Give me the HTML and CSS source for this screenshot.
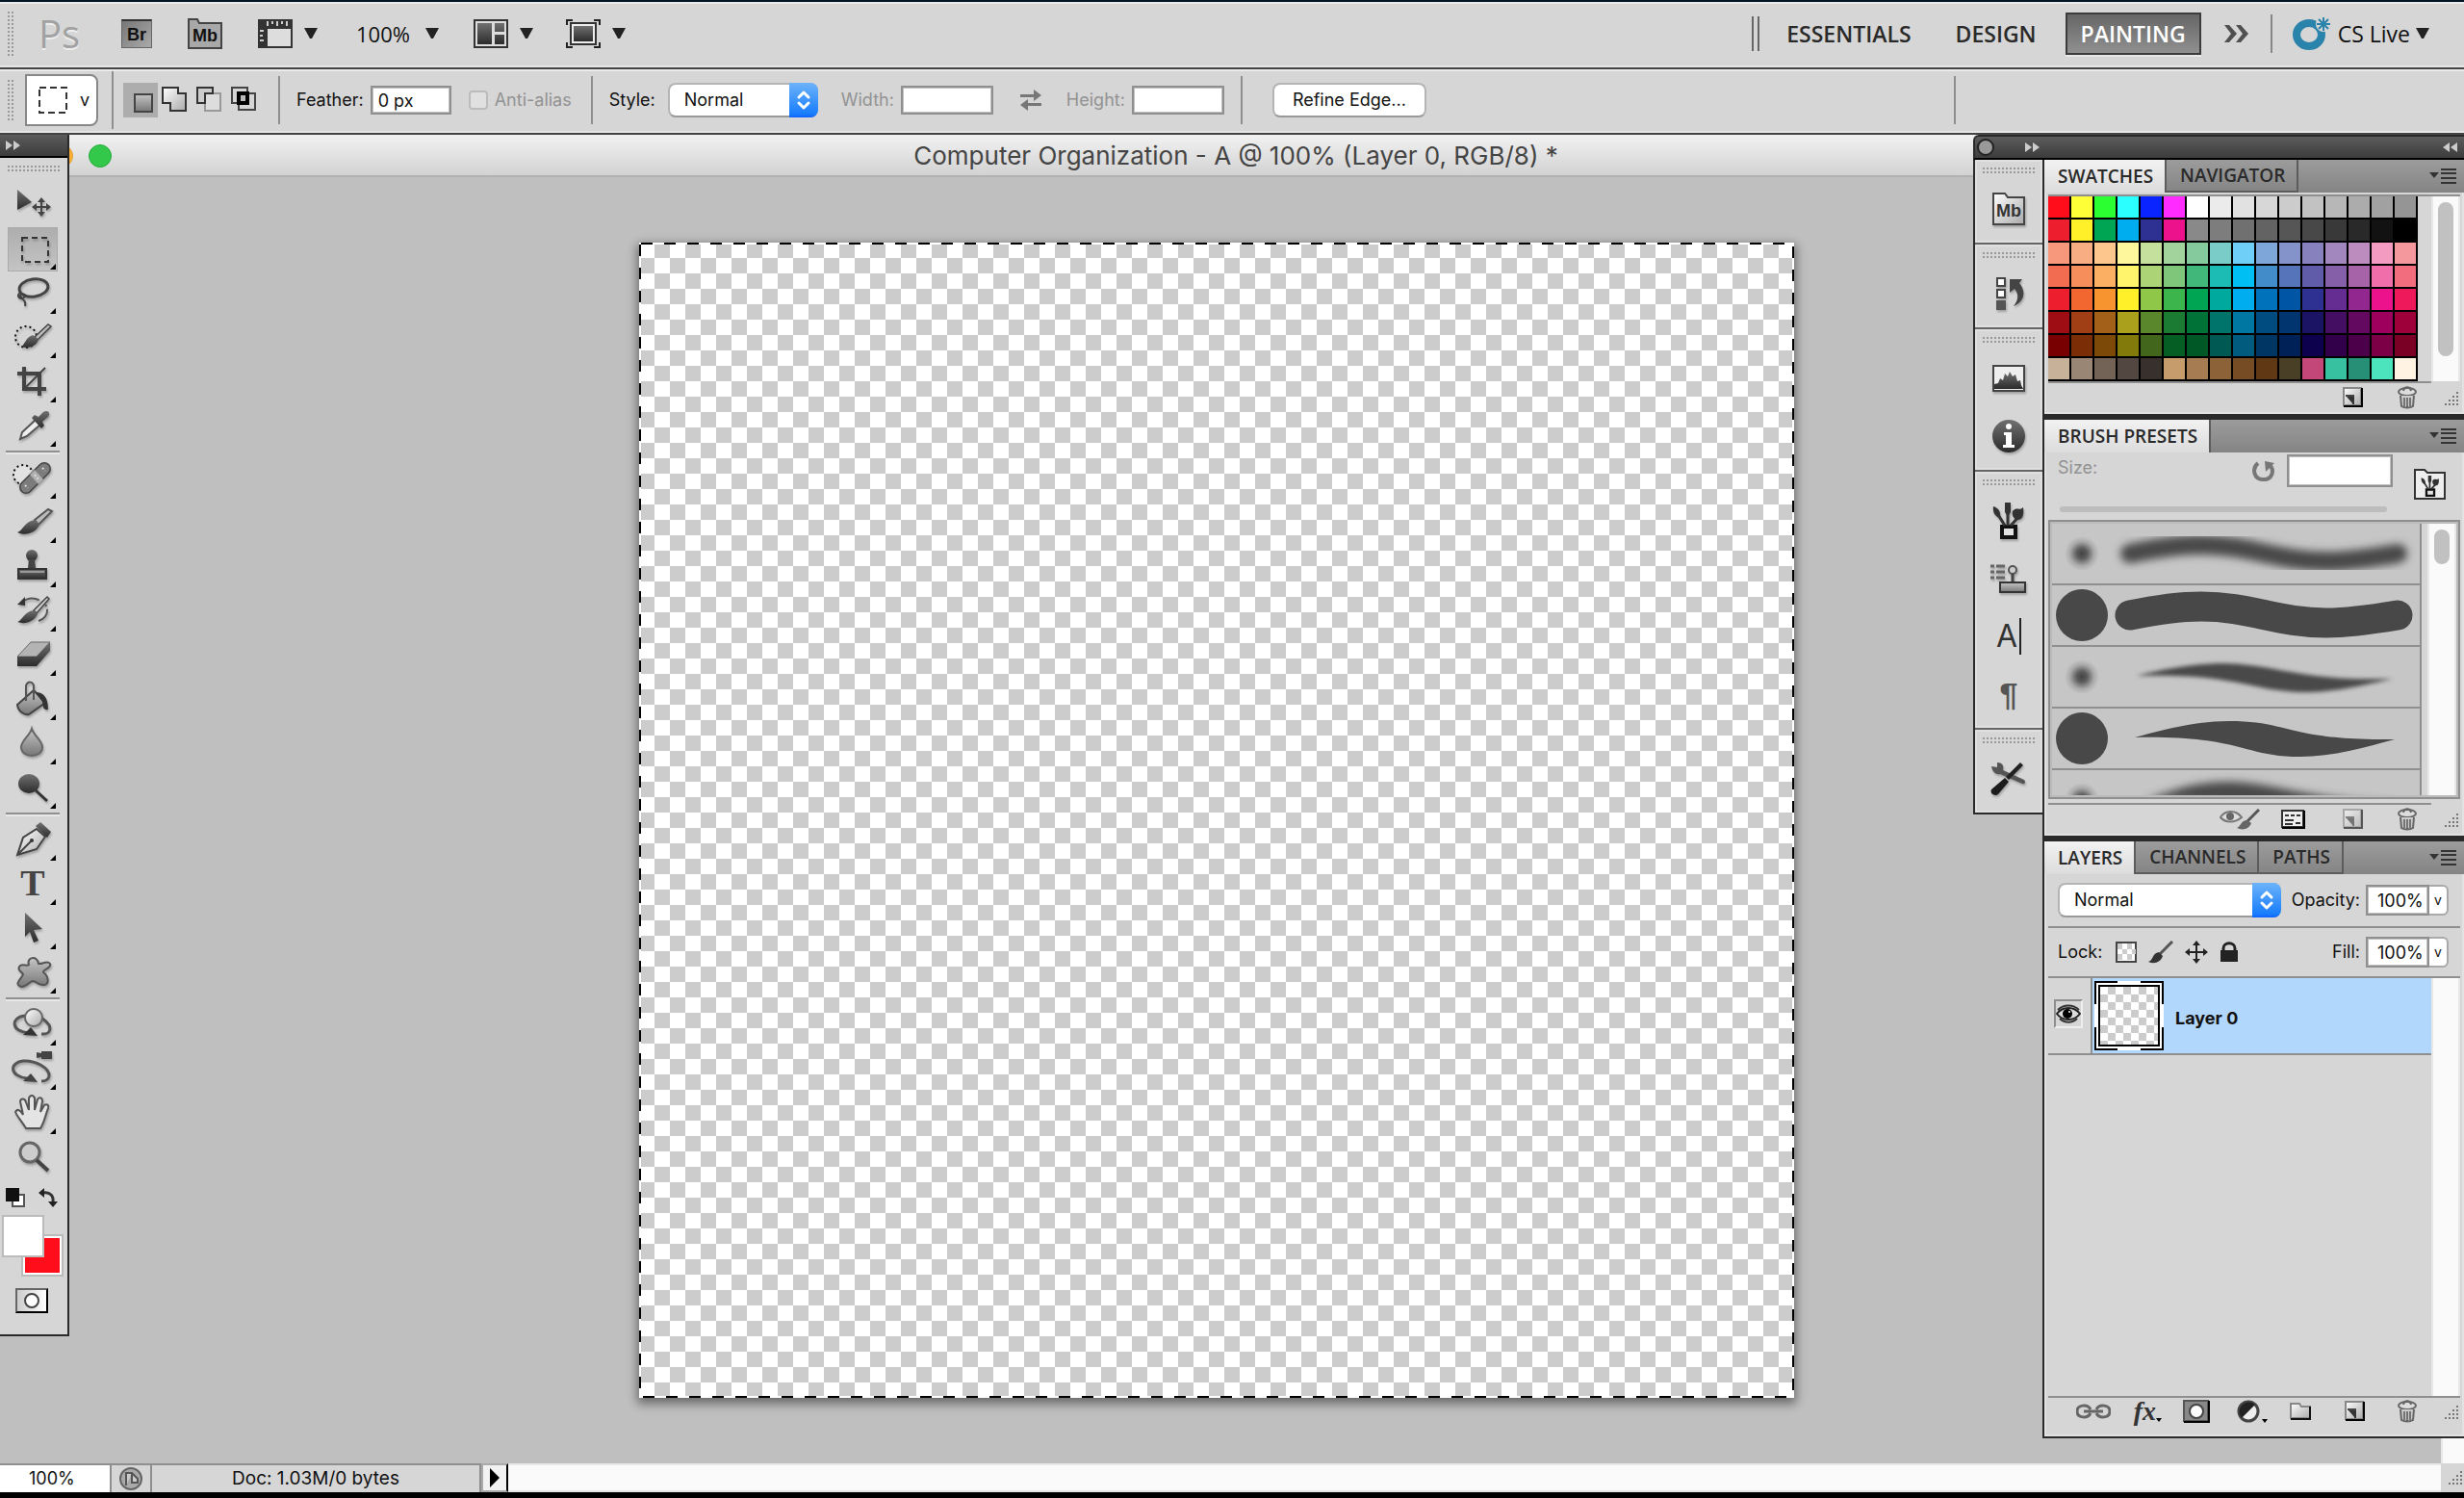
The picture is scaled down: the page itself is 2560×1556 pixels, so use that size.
FILE: index.html
```html
<!DOCTYPE html>
<html lang="en">
  <head>
    <meta charset="UTF-8" />
    <meta name="viewport" content="width=device-width, initial-scale=1.0" />
    <title>Computer Organization</title>
    <link rel="stylesheet" href="styles.css">
  </head>
  <body>
    <!-- shared gradients and symbols -->
    <svg class="defs" width="0" height="0">
      <defs>
        <linearGradient id="dark" x1="0" y1="0" x2="0" y2="1"><stop offset="0" stop-color="#707070"/><stop offset="1" stop-color="#2c2c2c"/></linearGradient>
        <linearGradient id="mid" x1="0" y1="0" x2="0" y2="1"><stop offset="0" stop-color="#c4c4c4"/><stop offset="1" stop-color="#777"/></linearGradient>
        <linearGradient id="light" x1="0" y1="0" x2="1" y2="1"><stop offset="0" stop-color="#fff"/><stop offset="1" stop-color="#aaa"/></linearGradient>
        <radialGradient id="soft"><stop offset="0" stop-color="#444"/><stop offset="0.3" stop-color="#5c5c5c"/><stop offset="0.7" stop-color="#aaa"/><stop offset="1" stop-color="#c6c6c6"/></radialGradient>
        <filter id="blur" x="-10%" y="-50%" width="120%" height="200%"><feGaussianBlur stdDeviation="4"/></filter>
        <filter id="blur-small" x="-10%" y="-50%" width="120%" height="200%"><feGaussianBlur stdDeviation="2"/></filter>
      </defs>
      <symbol id="caret" viewBox="0 0 14 12"><path d="M0 0h14L8 11H6z" fill="#222"/></symbol>
      <symbol id="updown" viewBox="0 0 28 36"><path d="M9 15l5-5 5 5M9 21l5 5 5-5" fill="none" stroke="#fff" stroke-width="3" stroke-linecap="round" stroke-linejoin="round"/></symbol>
      <symbol id="menu" viewBox="0 0 28 16"><path d="M0 4h10L5 10z" fill="#333"/><path d="M12 1h16M12 5h16M12 10h16M12 15h16" stroke="#333" stroke-width="2"/></symbol>
      <symbol id="page" viewBox="0 0 22 22"><path d="M1 1h18v18H1z" fill="url(#light)" stroke="#888" stroke-width="2"/><path d="M20 1v19H1" fill="none" stroke="#000" stroke-width="2"/><path d="M3 9h8v9" fill="none" stroke="#444" stroke-width="2"/><path d="M4 10l7 8h1v-8z" fill="#333"/></symbol>
      <symbol id="trash" viewBox="0 0 22 24"><ellipse cx="11" cy="6" rx="9" ry="4" fill="#ddd" stroke="#666" stroke-width="2"/><path d="M7 5c1-5 7-5 8 0" fill="none" stroke="#666" stroke-width="2"/><path d="M4 10l1 11c3 2 9 2 12 0l1-11" fill="#ccc" stroke="#666" stroke-width="2"/><path d="M8 12v9M11 12v10M14 12v9" stroke="#555" stroke-width="1.500"/></symbol>
      <symbol id="cups" viewBox="0 0 36 38"><path d="M11 25h14v11H11z" fill="#e2e2e2" stroke="#111" stroke-width="4"/><path d="M14 24L6 11M17 24V8M20 24l8-9" stroke="#333" stroke-width="3"/><path d="M2 4c6 2 8 6 7 12-5-1-8-6-7-12zM14 0h6v10l-2 3h-2l-2-3zM22 9c4-5 7 0 11-4 1 7 0 13-6 13-4-1-6-5-5-9z" fill="#333"/></symbol>
    </svg>

    <header class="app-bar">
      <span class="grip grip-side"></span>
      <span class="ps">Ps</span>
      <button class="app-br">Br</button>
      <button class="app-mb">
        <svg width="38" height="34" viewBox="0 0 38 34"><path d="M2 32V2h9l2 4h23v26z" fill="#a8a8a8" stroke="#444" stroke-width="2"/></svg>
        <span>Mb</span>
      </button>
      <button class="app-icon extras">
        <svg width="36" height="30" viewBox="0 0 36 30"><path d="M0 0h36v30H0z" fill="#333"/><path d="M10 10h24v18H10z" fill="#ddd"/><path d="M10 2v5M15 2v3M20 2v5M25 2v3M30 2v5M2 12h4M2 17h3M2 22h4" stroke="#ccc" stroke-width="2"/></svg>
        <svg class="caret"><use href="#caret"/></svg>
      </button>
      <button class="app-icon zoom-level">100% <svg class="caret"><use href="#caret"/></svg></button>
      <button class="app-icon arrange">
        <svg width="36" height="30" viewBox="0 0 36 30"><path d="M1 1h34v28H1z" fill="#ddd" stroke="#333" stroke-width="2"/><path d="M4 4h15v22H4zM22 4h10v9H22zM22 16h10v10H22z" fill="url(#dark)"/></svg>
        <svg class="caret"><use href="#caret"/></svg>
      </button>
      <button class="app-icon screen-mode">
        <svg width="36" height="30" viewBox="0 0 36 30"><path d="M1 6V1h6M29 1h6v5M35 24v5h-6M7 29H1v-5" fill="none" stroke="#222" stroke-width="2"/><path d="M5 4h26v22H5z" fill="#eee" stroke="#333" stroke-width="2"/><path d="M8 7h20v16H8z" fill="url(#dark)"/></svg>
        <svg class="caret"><use href="#caret"/></svg>
      </button>
      <nav class="workspaces">
        <span class="double-bar"></span>
        <button>ESSENTIALS</button>
        <button>DESIGN</button>
        <button class="active">PAINTING</button>
        <button class="more" aria-label="More workspaces"><svg width="28" height="22" viewBox="0 0 28 22"><path d="M2 2h5l8 9-8 9H2l7-9zM14 2h5l8 9-8 9h-5l7-9z" fill="#505050"/></svg></button>
      </nav>
      <button class="cs-live">
        <svg width="42" height="36" viewBox="0 0 42 36"><ellipse cx="18" cy="19" rx="13" ry="12" fill="none" stroke="#2a83ab" stroke-width="8"/><circle cx="33" cy="8" r="8" fill="#d6d6d6"/><path d="M33 1v14M26 8h14M28 3l10 10M38 3L28 13" stroke="#2a83ab" stroke-width="2"/></svg>
        <span>CS Live</span>
        <svg class="caret"><use href="#caret"/></svg>
      </button>
    </header>

    <div class="options-bar">
      <span class="grip grip-side"></span>
      <button class="tool-preset">
        <svg width="30" height="28" viewBox="0 0 30 28"><path d="M1 1h28v26H1z" fill="none" stroke="#333" stroke-width="2" stroke-dasharray="7 4"/></svg>
        <span>v</span>
      </button>
      <div class="modes">
        <button class="on" aria-label="New selection"><svg viewBox="0 0 36 36"><path d="M12 12h18v18H12z" fill="url(#mid)" stroke="#444" stroke-width="2"/></svg></button>
        <button aria-label="Add"><svg viewBox="0 0 36 36"><path d="M5 5h16v6h8v18H13v-8H5z" fill="url(#light)" stroke="#333" stroke-width="2"/></svg></button>
        <button aria-label="Subtract"><svg viewBox="0 0 36 36"><path d="M13 11h16v18H13z" fill="#ddd" stroke="#999" stroke-width="2"/><path d="M5 5h16v6h-8v10H5z" fill="#ccc" stroke="#333" stroke-width="2"/></svg></button>
        <button aria-label="Intersect"><svg viewBox="0 0 36 36"><path d="M5 5h16v16H5zM12 11h17v17H12z" fill="none" stroke="#444" stroke-width="2"/><path d="M12 11h9v10h-9z" fill="#bbb" stroke="#000" stroke-width="4"/></svg></button>
      </div>
      <span class="rule"></span>
      <label for="feather">Feather:</label>
      <input class="field feather" id="feather" type="text" value="0 px">
      <input class="check" id="alias" type="checkbox" disabled>
      <label class="off" for="alias">Anti-alias</label>
      <span class="rule"></span>
      <label for="style">Style:</label>
      <span class="select style-select"><select id="style"><option>Normal</option></select><svg><use href="#updown"/></svg></span>
      <label class="off width-label" for="width">Width:</label>
      <input class="field size" id="width" type="text" disabled>
      <button class="swap" aria-label="Swap width and height"><svg width="26" height="22" viewBox="0 0 26 22"><path d="M2 5h14V0l8 6-8 6V8H2zM24 17H10v5l-8-6 8-6v4h14z" fill="#777"/></svg></button>
      <label class="off" for="height">Height:</label>
      <input class="field size" id="height" type="text" disabled>
      <span class="rule"></span>
      <button class="refine">Refine Edge...</button>
      <span class="rule far"></span>
    </div>

    <main class="document">
      <div class="title-bar">
        <span class="light minimize"></span>
        <span class="light maximize"></span>
        <h1>Computer Organization - A @ 100% (Layer 0, RGB/8) *</h1>
      </div>
      <div class="work-area">
        <div class="stage"><div class="artboard"></div></div>
        <div class="v-scroll"></div>
      </div>
      <footer class="status-bar">
        <input class="status-zoom" type="text" value="100%" aria-label="Zoom">
        <button class="status-icon" aria-label="Version"><svg width="26" height="26" viewBox="0 0 26 26"><circle cx="13" cy="13" r="11" fill="#aaa" stroke="#666" stroke-width="2"/><path d="M8 20V7h6l6 6v4h-6V7" fill="#ccc" stroke="#555" stroke-width="2"/></svg></button>
        <span class="status-doc">Doc: 1.03M/0 bytes</span>
        <button class="status-more" aria-label="Status menu"><svg width="10" height="20" viewBox="0 0 10 20"><path d="M0 0l10 10L0 20z"/></svg></button>
        <div class="h-scroll"></div>
        <div class="corner"><i class="resize"></i></div>
      </footer>

      <!-- tools palette -->
      <aside class="toolbox">
        <div class="palette-head"><svg width="16" height="12" viewBox="0 0 16 12"><path d="M0 1l7 5-7 5zM8 1l7 5-7 5z" fill="#ccc"/></svg></div>
        <span class="grip grip-top"></span>
        <div class="tools">
          <button class="flat" aria-label="Move"><svg viewBox="0 0 52 46"><path d="M10 7l15 13-15 8z" fill="url(#dark)"/><path d="M35 17v16M27 25h16" stroke="#444" stroke-width="2"/><path d="M35 15l4 5h-8zM35 35l4-5h-8zM25 25l5-4v8zM45 25l-5-4v8z" fill="#444"/></svg></button>
          <button class="on" aria-label="Marquee"><svg viewBox="0 0 52 46"><path d="M15 11h27v25H15z" fill="none" stroke="#333" stroke-width="2" stroke-dasharray="6 4"/></svg></button>
          <button aria-label="Lasso"><svg viewBox="0 0 52 46"><ellipse cx="27" cy="17" rx="15" ry="9" fill="none" stroke="#444" stroke-width="3" transform="rotate(-8 27 17)"/><path d="M13 22c-5 3 0 8 4 5s-3-5-4-2c1 4 7 4 5 11" fill="none" stroke="#444" stroke-width="2"/></svg></button>
          <button aria-label="Quick selection"><svg viewBox="0 0 52 46"><circle cx="19" cy="22" r="11" fill="none" stroke="#111" stroke-width="2" stroke-dasharray="2 3"/><path d="M28 22l14-13 3 2-14 14z" fill="#bbb" stroke="#444" stroke-width="1.500"/><path d="M14 32c4-2 4-9 12-12l6 5c-3 8-12 9-18 7z" fill="url(#dark)"/></svg></button>
          <button aria-label="Crop"><svg viewBox="0 0 52 46"><path d="M17 7v23h23M10 14h23v23" fill="none" stroke="#444" stroke-width="4"/><path d="M17 30L39 8" stroke="#444" stroke-width="2"/></svg></button>
          <button aria-label="Eyedropper"><svg viewBox="0 0 52 46"><path d="M13 36l2-7 14-13 5 5-14 12z" fill="#eee" stroke="#555" stroke-width="2"/><path d="M25 14l3-3 4 2 5-5c5-3 8 1 5 5l-6 5 2 4-3 3z" fill="url(#dark)"/></svg></button>
          <hr>
          <button aria-label="Healing brush"><svg viewBox="0 0 52 46"><circle cx="16" cy="19" r="10" fill="#e2e2e2" stroke="#111" stroke-width="2" stroke-dasharray="2 3"/><path d="M19 32L38 13" stroke="#444" stroke-width="14" stroke-linecap="round"/><path d="M19 32L38 13" stroke="#7c7c7c" stroke-width="11" stroke-linecap="round"/><path d="M23 19l9 10 5-5-9-10z" fill="#b0b0b0"/><path d="M18 30l3 3M36 12l3 3M28 19l4 5" stroke="#ddd" stroke-width="2" stroke-dasharray="2 2"/></svg></button>
          <button aria-label="Brush"><svg viewBox="0 0 52 46"><path d="M28 20L42 9l4 2-14 14z" fill="#bbb" stroke="#555" stroke-width="2"/><path d="M10 33c6-2 7-11 18-13l5 5c-4 9-15 12-23 8z" fill="url(#dark)"/></svg></button>
          <button aria-label="Clone stamp"><svg viewBox="0 0 52 46"><circle cx="25" cy="11" r="6" fill="url(#dark)"/><path d="M22 15h6l1 9h-8z" fill="#444"/><path d="M11 25h29v10H11z" fill="url(#dark)" stroke="#333" stroke-width="2"/><path d="M13 28h25" stroke="#999" stroke-width="2"/></svg></button>
          <button aria-label="History brush"><svg viewBox="0 0 52 46"><path d="M14 14c10-8 22-4 27 5 1 7-3 12-9 14" fill="none" stroke="#555" stroke-width="2" stroke-dasharray="20 3 2 3 2 3"/><path d="M10 16l8-8v9z" fill="#333"/><path d="M27 22L41 8l2 2-13 15z" fill="#ccc" stroke="#444" stroke-width="1.500"/><path d="M10 34c5-1 7-11 17-12l4 4c-4 8-13 11-21 8z" fill="url(#dark)"/></svg></button>
          <button aria-label="Eraser"><svg viewBox="0 0 52 46"><path d="M10 24L24 9h20L30 24z" fill="#b4b4b4" stroke="#666"/><path d="M10 24h20v10H10zM30 24L44 9v9L30 34z" fill="url(#dark)"/></svg></button>
          <button aria-label="Paint bucket"><svg viewBox="0 0 52 46"><path d="M10 28l17-15 12 13-17 12c-5 1-11-3-12-10z" fill="url(#mid)" stroke="#444" stroke-width="2"/><path d="M19 24V8c2-5 7-4 8 0v15" fill="none" stroke="#555" stroke-width="2"/><path d="M29 15c8 0 13 5 13 18-6 1-5-4-6-8z" fill="#333"/></svg></button>
          <button aria-label="Blur"><svg viewBox="0 0 52 46"><path d="M25 7c2 7 11 12 11 19 0 12-22 12-22 0 0-7 9-12 11-19z" fill="url(#mid)" stroke="#666" stroke-width="2"/></svg></button>
          <button aria-label="Dodge"><svg viewBox="0 0 52 46"><ellipse cx="22" cy="18" rx="11" ry="10" fill="url(#dark)"/><path d="M29 25l12 11" stroke="#333" stroke-width="3"/></svg></button>
          <hr>
          <button aria-label="Pen"><svg viewBox="0 0 52 46"><path d="M10 38l6-18 14-9 9 8-9 13z" fill="url(#light)" stroke="#444" stroke-width="2"/><path d="M11 37l13-13" stroke="#444" stroke-width="2"/><circle cx="25" cy="23" r="2" fill="#333"/><path d="M29 8l5-4 11 10-4 6z" fill="url(#dark)"/></svg></button>
          <button class="type" aria-label="Type">T</button>
          <button aria-label="Path selection"><svg viewBox="0 0 52 46"><path d="M18 6l18 17-9 1 5 11-5 2-4-11-5 5z" fill="url(#dark)"/></svg></button>
          <button aria-label="Custom shape"><svg viewBox="0 0 52 46"><path d="M22 14c-3-8 9-10 10-1 4 1 9-4 12 0 2 5-8 6-7 9 6 4 6 13 1 13-6 1-8-4-12-4-4 1-7 7-12 6-9-3 2-10 2-13-2-3-7-5-3-9 3-2 7 1 9-1z" fill="url(#mid)" stroke="#555" stroke-width="2"/></svg></button>
          <hr>
          <button aria-label="3D rotate"><svg viewBox="0 0 52 46"><path d="M18 13C2 15 4 30 22 31M36 16c13 9 8 17-1 16" fill="none" stroke="#555" stroke-width="3"/><path d="M16 33l8-8 7 9z" fill="#333"/><circle cx="27" cy="15" r="9" fill="url(#light)" stroke="#666" stroke-width="2"/></svg></button>
          <button aria-label="3D camera"><svg viewBox="0 0 52 46"><path d="M20 32C2 30 1 16 16 14c12-1 28 7 27 16-1 4-4 5-8 5" fill="none" stroke="#555" stroke-width="3"/><path d="M16 35l8-8 7 9zM30 8V5l5 1V4h11v8H35v-2l-5 1z" fill="#444"/></svg></button>
          <button aria-label="Hand"><svg viewBox="0 0 52 46"><path d="M19 38C15 31 10 26 8 21c2-4 5-2 8 3L13 10c1-4 5-3 6 1l3 8V7c1-4 5-4 6 0v12l3-11c2-3 5-2 5 2l-2 11 4-7c3-2 5 0 4 3-3 8-4 15-8 21z" fill="#e4e4e4" stroke="#555" stroke-width="2"/></svg></button>
          <button class="flat" aria-label="Zoom"><svg viewBox="0 0 52 46"><circle cx="23" cy="17" r="10" fill="#ccc" stroke="#666" stroke-width="3"/><path d="M30 25l12 11" stroke="#444" stroke-width="4"/></svg></button>
        </div>
        <div class="color-tools">
          <svg width="20" height="20" viewBox="0 0 20 20"><path d="M7 7h12v12H7z" fill="#fff" stroke="#555" stroke-width="2"/><path d="M0 0h14v14H0z" fill="#111"/></svg>
          <svg width="20" height="20" viewBox="0 0 20 20"><path d="M5 5c7-1 11 3 10 10" fill="none" stroke="#333" stroke-width="3"/><path d="M0 5l6-5v10zM15 20l-5-6h10z" fill="#222"/></svg>
        </div>
        <div class="color-pair">
          <button class="back-color" aria-label="Background colour"></button>
          <button class="front-color" aria-label="Foreground colour"></button>
        </div>
        <button class="quick-mask" aria-label="Quick mask"><svg width="18" height="18" viewBox="0 0 18 18"><circle cx="9" cy="9" r="7" fill="#fff" stroke="#444" stroke-width="2"/></svg></button>
      </aside>

      <!-- right dock -->
      <aside class="dock">
        <div class="palette-head dock-head">
          <i class="close"></i>
          <svg width="16" height="12" viewBox="0 0 16 12"><path d="M0 1l7 5-7 5zM8 1l7 5-7 5z" fill="#ccc"/></svg>
          <svg class="collapse" width="16" height="12" viewBox="0 0 16 12"><path d="M7 1L0 6l7 5zM15 1L8 6l7 5z" fill="#ccc"/></svg>
        </div>
        <div class="dock-body">
          <div class="icon-dock">
            <div class="icon-group">
              <span class="grip grip-top"></span>
              <button class="mini-bridge" aria-label="Mini Bridge"><svg width="36" height="36" viewBox="0 0 36 36"><path d="M2 34V2h12l3 4h17v28z" fill="url(#light)" stroke="#444" stroke-width="2"/></svg><span>Mb</span></button>
            </div>
            <div class="icon-group">
              <span class="grip grip-top"></span>
              <button aria-label="History"><svg width="36" height="36" viewBox="0 0 36 36"><path d="M6 2h8v8H6zM6 14h8v8H6z" fill="#fff" stroke="#444" stroke-width="2"/><path d="M5 25h10v10H5z" fill="#555"/><path d="M19 3h13l-3 4c7 8 6 19-6 24 6-8 5-13 1-18l-5 4z" fill="#444"/></svg></button>
            </div>
            <div class="icon-group">
              <span class="grip grip-top"></span>
              <button aria-label="Histogram"><svg width="36" height="30" viewBox="0 0 36 30"><path d="M2 2h32v26H2z" fill="#eee" stroke="#444" stroke-width="2"/><path d="M3 26v-5l4-1 2-5 3 2 2-7 3 3 2-5 3 5 3-2 2 7 3-1 1 5 2 4z" fill="url(#dark)"/></svg></button>
              <button aria-label="Info"><svg width="36" height="36" viewBox="0 0 36 36"><circle cx="18" cy="18" r="17" fill="url(#dark)"/><path d="M13 14h8v13h3v3H12v-3h3V17h-2z" fill="#fff"/><circle cx="18" cy="8" r="3" fill="#fff"/></svg></button>
            </div>
            <div class="icon-group">
              <span class="grip grip-top"></span>
              <button aria-label="Brush"><svg width="36" height="38"><use href="#cups"/></svg></button>
              <button aria-label="Clone source"><svg width="38" height="32" viewBox="0 0 38 32"><path d="M0 3h4M6 3h9M0 9h4M6 9h9M0 15h4M6 15h9" stroke="#666" stroke-width="3"/><circle cx="23" cy="7" r="4" fill="#ccc" stroke="#555" stroke-width="2"/><path d="M23 11v9" stroke="#444" stroke-width="3"/><path d="M10 20h26v10H10z" fill="url(#mid)" stroke="#333" stroke-width="2"/></svg></button>
              <button class="char" aria-label="Character">A</button>
              <button class="para" aria-label="Paragraph">¶</button>
            </div>
            <div class="icon-group">
              <span class="grip grip-top"></span>
              <button aria-label="Tool presets"><svg width="38" height="36" viewBox="0 0 38 36"><path d="M1 5l6 1V1c6 0 7 4 6 8l22 10c2 2 1 5-2 4L10 13c-4 1-8-2-9-8z" fill="#555"/><path d="M31 1l3 3-15 15-3-3z" fill="#222"/><path d="M15 17l4 4L8 34c-4 3-9-1-7-5z" fill="#1c1c1c"/></svg></button>
            </div>
          </div>

          <div class="panels">
            <section class="panel">
              <div class="tabs"><button class="active">SWATCHES</button><button>NAVIGATOR</button><svg class="menu"><use href="#menu"/></svg></div>
              <div class="swatch-area">
                <div class="swatches" id="swatches"></div>
                <div class="scroll"><i class="thumb tall"></i></div>
              </div>
              <div class="panel-foot"><svg class="page"><use href="#page"/></svg><svg class="trash"><use href="#trash"/></svg><i class="resize"></i></div>
            </section>

            <section class="panel">
              <div class="tabs"><button class="active">BRUSH PRESETS</button><svg class="menu"><use href="#menu"/></svg></div>
              <div class="brush-size">
                <div class="size-main">
                  <div class="size-row">
                    <label class="off" for="brush-size">Size:</label>
                    <svg width="24" height="24" viewBox="0 0 24 24"><path d="M6 4c-7 6-4 17 5 17 9 1 13-9 7-15" fill="none" stroke="#777" stroke-width="4"/><path d="M13 2l10 2-9 9z" fill="#777"/></svg>
                    <input class="field" id="brush-size" type="text" disabled>
                  </div>
                  <div class="track"></div>
                </div>
                <button class="brush-panel" aria-label="Brush panel"><svg width="34" height="34" viewBox="0 0 34 34"><path d="M1 32V2h10l3 3h18v27z" fill="#eee" stroke="#333" stroke-width="2"/><use href="#cups" x="4" y="8" width="26" height="22"/></svg></button>
              </div>
              <div class="brush-box">
                <ul class="brushes">
                  <li><svg viewBox="0 0 382 62"><circle cx="31" cy="31" r="18" fill="url(#soft)"/><path d="M81 31C105 26 130 22 155 22c50 0 80 17 130 17 25 0 50-4 74-8" fill="none" stroke="#484848" stroke-width="20" stroke-linecap="round" filter="url(#blur)"/></svg></li>
                  <li><svg viewBox="0 0 382 62"><circle cx="31" cy="31" r="27" fill="#484848"/><path d="M81 31C105 26 130 22 155 22c50 0 80 17 130 17 25 0 50-4 74-8" fill="none" stroke="#484848" stroke-width="31" stroke-linecap="round"/></svg></li>
                  <li><svg viewBox="0 0 382 62"><circle cx="31" cy="31" r="18" fill="url(#soft)"/><path d="M88 30c32-8 62-13 92-13 58 2 80 19 174 16-36 8-60 14-94 14-58-2-70-20-172-17z" fill="#484848" filter="url(#blur-small)"/></svg></li>
                  <li><svg viewBox="0 0 382 62"><circle cx="31" cy="31" r="27" fill="#484848"/><path d="M86 30c36-10 66-17 98-17 65 0 58 20 172 19-30 8-64 18-98 18-61 0-58-22-172-20z" fill="#484848"/></svg></li>
                  <li><svg viewBox="0 0 382 62"><circle cx="31" cy="31" r="18" fill="url(#soft)"/><path d="M96 32c40-16 60-20 90-20 50 2 70 16 168 22-36 8-60 14-94 13-56-2-70-20-164-15z" fill="#484848" filter="url(#blur)"/></svg></li>
                </ul>
                <div class="scroll"><i class="thumb short"></i></div>
              </div>
              <div class="panel-foot lined">
                <svg width="42" height="22" viewBox="0 0 42 22"><path d="M1 9C6 1 17 1 23 9 16 15 6 15 1 9z" fill="#ddd" stroke="#777" stroke-width="2"/><circle cx="11" cy="8" r="4" fill="#666"/><path d="M28 14L41 1" stroke="#555" stroke-width="3"/><path d="M18 20c4-1 4-8 11-8l4 3c-2 6-9 8-15 5z" fill="#666"/></svg>
                <svg width="26" height="20" viewBox="0 0 26 20"><path d="M1 1h22v17H1z" fill="#eee" stroke="#333" stroke-width="2"/><path d="M24 1v18H1" fill="none" stroke="#000" stroke-width="2"/><path d="M4 6h4M10 6h4M16 6h4M4 11h9M4 15h8M15 14h5" stroke="#333" stroke-width="2"/></svg>
                <svg class="page dim"><use href="#page"/></svg><svg class="trash"><use href="#trash"/></svg><i class="resize"></i>
              </div>
            </section>

            <section class="panel layers">
              <div class="tabs"><button class="active">LAYERS</button><button>CHANNELS</button><button>PATHS</button><svg class="menu"><use href="#menu"/></svg></div>
              <div class="layer-row blend">
                <span class="select"><select aria-label="Blend mode"><option>Normal</option></select><svg><use href="#updown"/></svg></span>
                <label for="opacity">Opacity:</label>
                <span class="percent"><input class="field" id="opacity" type="text" value="100%"><button aria-label="Opacity slider">v</button></span>
              </div>
              <div class="layer-row locks">
                <span>Lock:</span>
                <svg width="22" height="22" viewBox="0 0 22 22"><path d="M1 1h20v20H1z" fill="#fff" stroke="#444" stroke-width="2"/><path d="M2 2h5v6H2zM12 2h5v6h-5zM7 8h5v5H7zM17 8h4v5h-4zM2 13h5v6H2zM12 13h5v6h-5z" fill="#ccc"/></svg>
                <svg width="26" height="24" viewBox="0 0 26 24"><path d="M12 14L25 1" stroke="#555" stroke-width="3"/><path d="M0 22c5-1 4-9 11-10l4 4c-2 6-8 9-15 6z" fill="#333"/></svg>
                <svg width="24" height="24" viewBox="0 0 24 24"><path d="M12 3v18M3 12h18" stroke="#222" stroke-width="2"/><path d="M12 0l4 5H8zM12 24l4-5H8zM0 12l5-4v8zM24 12l-5-4v8z" fill="#222"/></svg>
                <svg width="20" height="22" viewBox="0 0 20 22"><path d="M4 10V7c0-7 12-7 12 0v3" fill="none" stroke="#222" stroke-width="3"/><path d="M1 9h18v12H1z" fill="#222"/></svg>
                <label for="fill">Fill:</label>
                <span class="percent"><input class="field" id="fill" type="text" value="100%"><button aria-label="Fill slider">v</button></span>
              </div>
              <div class="layer-list">
                <div class="layer-items">
                  <div class="layer">
                    <button class="eye" aria-label="Toggle visibility"><svg width="26" height="20" viewBox="0 0 26 20"><path d="M1 10C7 2 19 2 25 10 19 18 7 18 1 10z" fill="#ddd" stroke="#222" stroke-width="2"/><circle cx="12" cy="10" r="5" fill="#000"/><path d="M2 6C8 0 18 0 24 6M4 15c5 5 13 5 18 0" fill="none" stroke="#333" stroke-width="2"/><circle cx="14" cy="8" r="1" fill="#fff"/></svg></button>
                    <div class="layer-name">
                      <svg width="72" height="72" viewBox="0 0 72 72"><defs><pattern id="cells" width="16" height="16" x="6" y="6" patternUnits="userSpaceOnUse"><path d="M0 0h16v16H0z" fill="#fff"/><path d="M0 8h8v8H0zM8 0h8v8H8z" fill="#ccc"/></pattern></defs><path d="M0 0h72v72H0z" fill="#fff"/><path d="M1 24V1h23M48 1h23v23M71 48v23H48M24 71H1V48" fill="none" stroke="#000" stroke-width="2"/><path d="M5 5h62v62H5z" fill="url(#cells)" stroke="#000" stroke-width="2"/></svg>
                      <span>Layer 0</span>
                    </div>
                  </div>
                </div>
                <div class="scroll"></div>
              </div>
              <div class="panel-foot layer-foot">
                <svg width="36" height="16" viewBox="0 0 36 16"><path d="M15 6C12 0 1 1 1 8s11 8 14 2M21 6c3-6 14-5 14 2s-11 8-14 2M8 8h20" fill="none" stroke="#666" stroke-width="3"/></svg>
                <span class="fx">fx<i></i></span>
                <svg width="28" height="24" viewBox="0 0 28 24"><path d="M1 1h25v21H1z" fill="#888" stroke="#555" stroke-width="2"/><path d="M27 1v22H1" fill="none" stroke="#000" stroke-width="2"/><circle cx="14" cy="12" r="7" fill="#fff" stroke="#444" stroke-width="2"/></svg>
                <svg width="32" height="24" viewBox="0 0 32 24"><circle cx="12" cy="12" r="10" fill="#eee" stroke="#444" stroke-width="3"/><path d="M5 19L19 5C10-3-3 9 5 19z" fill="#222"/><path d="M26 20h6l-3 4z"/></svg>
                <svg width="24" height="20" viewBox="0 0 24 20"><path d="M2 17V2h9l2 3h9v12z" fill="url(#light)" stroke="#888" stroke-width="2"/><path d="M22 5v13H2" fill="none" stroke="#111" stroke-width="2"/></svg>
                <svg class="page"><use href="#page"/></svg><svg class="trash"><use href="#trash"/></svg><i class="resize"></i>
              </div>
            </section>
          </div>
        </div>
      </aside>
    </main>

    <script>
      // one string per row of swatches
      const rows = [
        "ff0d1b ffff38 2bff32 2bffff 0a24ff ff2bff ffffff ebebeb e1e1e1 d7d7d7 cccccc c2c2c2 b7b7b7 acacac a1a1a1 959595",
        "ed1f2f fff029 00a553 00aeef 2e3192 ec128c 898989 7d7d7d 707070 636363 565656 484848 393939 292929 121212 000000",
        "f7977c f9ad82 fdc68c fff79b c5df9c a3d39c 84ca9c 7accc8 70cff6 7ea6d8 8493c9 8782be a187be bc8cbf f49bc2 f5989d",
        "f16c50 f68e5c fbaf62 fff46c acd376 7fc67b 41b87a 1cbbb4 00bff3 438cca 5574b9 605ca9 855fa8 a663a8 f06ea9 f26d7d",
        "ed1f2f f1672f f7942f fff029 8fc749 3cb54c 00a553 00a99d 00aeef 0072bc 0055a5 2e3192 652d91 92278f ec128c ed195b",
        "9e0c14 a03f15 a36018 aba01c 5a862c 1b7b32 007237 00746b 0077a2 004b80 003570 1b1464 440f62 630a60 9e005e 9e0039",
        "790000 7b2d05 7d4908 827b0c 41661c 055f25 005826 005952 005b7f 003663 002157 0d004c 32004b 4b0049 7b0046 7a0026",
        "c7b299 998675 736357 534741 37302d c69c6d a67c52 8c6239 754c24 603813 493e26 c34778 38c1a0 278f75 4be4bd fff3e3"
      ];
      const box = document.querySelector("#swatches");

      rows.join(" ").split(" ").forEach((color) => {
        const swatch = document.createElement("button");
        swatch.style.background = `#${color}`;
        swatch.setAttribute("aria-label", color);
        box.append(swatch);
      });
    </script>
  </body>
</html>
```
FILE: styles.css
```css
* {
  box-sizing: border-box;
}

body {
  margin: 0;
  height: 100vh;
  display: flex;
  flex-direction: column;
  overflow: hidden;
  background: #000;
  border-top: 2px solid #001423;
  border-bottom: 6px solid #000;
  font: 18px/24px Inter, "Liberation Sans", sans-serif;
  color: #111;
}

button,
input,
select {
  margin: 0;
  padding: 0;
  border: 0;
  border-radius: 0;
  background: none;
  font: inherit;
  color: inherit;
}

svg {
  display: block;
  flex: none;
}

.defs {
  position: absolute;
}

.off {
  color: #929292;
}

.grip {
  flex: none;
  background: conic-gradient(transparent 75%, #999 0) 0 0 / 4px 4px;
}

.grip-side {
  width: 6px;
  margin-left: 8px;
}

.grip-top {
  display: block;
  width: 54px;
  height: 6px;
  margin: 8px 8px 0;
}

.resize {
  width: 20px;
  height: 20px;
  background: conic-gradient(transparent 75%, #777 0) 0 0 / 4px 4px;
  clip-path: polygon(100% 0, 100% 100%, 0 100%);
}

/* top bars */
.app-bar,
.options-bar {
  flex: none;
  display: flex;
  align-items: center;
  padding-bottom: 4px;
  background: #d6d6d6;
  border-top: 2px solid #ebebeb;
  border-bottom: 2px solid #444;
  box-shadow: inset 0 -2px #e6e6e6;
}

.app-bar {
  height: 70px;
  font: 22px/28px "Open Sans", "Noto Sans", sans-serif;
}

.app-bar .grip {
  height: 46px;
}

.caret {
  width: 14px;
  height: 12px;
}

.ps {
  width: 56px;
  margin-left: 26px;
  font-size: 40px;
  color: #a2a2a2;
  text-shadow: 0 2px #eee;
}

.app-br {
  width: 32px;
  height: 30px;
  margin-left: 30px;
  border: 1px solid #666;
  border-top: 2px solid #333;
  background: linear-gradient(135deg, #777, #aaa);
  font: bold 18px/26px "Liberation Sans", sans-serif;
}

.app-mb {
  display: grid;
  place-items: center;
  margin-left: 36px;
  font: bold 18px/24px "Liberation Sans", sans-serif;
}

.app-mb > *,
.mini-bridge > * {
  grid-area: 1 / 1;
}

.app-mb span,
.mini-bridge span {
  z-index: 1;
  padding-top: 4px;
}

.app-icon {
  display: flex;
  align-items: center;
  gap: 12px;
}

.extras {
  margin-left: 36px;
}

.zoom-level {
  gap: 16px;
  margin-left: 40px;
}

.arrange {
  margin-left: 36px;
}

.screen-mode {
  margin-left: 34px;
}

.workspaces {
  display: flex;
  align-items: center;
  margin-left: auto;
}

.double-bar {
  width: 8px;
  height: 36px;
  margin-right: 12px;
  border: solid #666;
  border-width: 0 2px;
}

.workspaces button {
  height: 44px;
  padding: 0 14px;
  margin-right: 14px;
  border: 2px solid transparent;
  font-size: 23px;
  font-weight: 600;
  color: #2a2a2a;
}

.workspaces .active {
  border-color: #3c3c3c;
  background: linear-gradient(#666, #909090);
  color: #fff;
  box-shadow: 0 2px #e8e8e8;
}

.workspaces .more {
  padding: 0 6px;
}

.cs-live {
  display: flex;
  align-items: center;
  height: 40px;
  margin-right: 36px;
  padding-left: 20px;
  border-left: 2px solid #888;
  gap: 6px;
  font-size: 23px;
}

.options-bar {
  height: 68px;
}

.options-bar .grip {
  height: 42px;
}

.tool-preset {
  display: flex;
  align-items: center;
  justify-content: space-between;
  width: 76px;
  height: 54px;
  padding: 0 7px 0 12px;
  margin-left: 12px;
  border: 2px solid #888;
  border-radius: 0 8px 8px 0;
  background: #fff;
}

.modes {
  display: flex;
  align-items: center;
  align-self: stretch;
  margin-left: 14px;
  padding-left: 10px;
  border-left: 2px solid #8f8f8f;
}

.modes button,
.modes svg {
  width: 36px;
  height: 36px;
}

.modes .on {
  background: #adadad;
}

.rule {
  flex: none;
  width: 2px;
  height: 50px;
  margin: 0 17px;
  background: #8f8f8f;
}

.far {
  margin: 0 528px 0 auto;
}

.field {
  height: 30px;
  padding: 0 6px;
  border: 2px solid #8f8f8f;
  background: #fff;
  box-shadow: inset 0 0 0 1px #c0c0c0;
}

.feather {
  width: 84px;
  margin-left: 7px;
}

.check {
  appearance: none;
  width: 20px;
  height: 20px;
  margin: 0 7px 0 18px;
  border: 2px solid #bbb;
  border-radius: 4px;
  background: #e0e0e0;
}

.off + .rule {
  margin-left: 20px;
}

.size {
  width: 96px;
  margin-left: 7px;
}

.select {
  position: relative;
  display: block;
}

.select select {
  appearance: none;
  width: 100%;
  height: 36px;
  padding-left: 15px;
  border: 2px solid #b4b4b4;
  border-bottom-color: #999;
  border-radius: 8px;
  background: #fff;
}

.select svg {
  position: absolute;
  top: 0;
  right: 0;
  width: 30px;
  height: 36px;
  border-radius: 0 8px 8px 0;
  background: linear-gradient(#6db3fa, #187dfc 90%, #1060ff);
  pointer-events: none;
}

.style-select {
  width: 156px;
  margin-left: 13px;
}

.width-label {
  margin-left: 24px;
}

.swap {
  margin: 0 24px 0 26px;
}

.refine {
  width: 160px;
  height: 36px;
  margin-left: 14px;
  border: 2px solid #b4b4b4;
  border-bottom-color: #999;
  border-radius: 8px;
  background: #fff;
}

/* document window */
.document {
  position: relative;
  flex: 1;
  min-height: 0;
  display: flex;
  flex-direction: column;
  background: #bfbfbf;
}

.title-bar {
  flex: none;
  display: flex;
  align-items: center;
  height: 44px;
  padding: 2px 0 0 52px;
  border-bottom: 2px solid #b2b2b2;
  background: linear-gradient(#f2f2f2, #d2d2d2);
}

.title-bar h1 {
  flex: 1;
  margin: 0 108px 0 0;
  text-align: center;
  font-size: 26px;
  line-height: 32px;
  font-weight: 400;
  color: #444;
}

.light {
  width: 24px;
  height: 24px;
  margin-right: 16px;
  border: 1px solid #24ab3a;
  border-radius: 50%;
  background: #34c84a;
}

.minimize {
  border-color: #dfa033;
  background: #fdb035;
}

.maximize {
  margin-right: 0;
}

.work-area {
  flex: 1;
  min-height: 0;
  display: flex;
}

.stage {
  flex: 1;
  display: flex;
  align-items: center;
  justify-content: center;
  padding-right: 8px;
}

.v-scroll {
  width: 24px;
  border-left: 2px solid #e8e8e8;
  background: #fafafa;
}

/* marching ants on four edges, then the transparency grid */
.artboard {
  flex: none;
  width: 1200px;
  height: 1200px;
  background:
    repeating-linear-gradient(90deg, #fff 0 2px, #000 2px 14px, #fff 14px 24px) 0 0 / 100% 2px no-repeat,
    repeating-linear-gradient(90deg, #fff 0 4px, #000 4px 16px, #fff 16px 24px) 0 100% / 100% 2px no-repeat,
    repeating-linear-gradient(#fff 0 2px, #000 2px 14px, #fff 14px 24px) 0 0 / 2px 100% no-repeat,
    repeating-linear-gradient(#fff 0 4px, #000 4px 16px, #fff 16px 24px) 100% 0 / 2px 100% no-repeat,
    conic-gradient(#ccc 25%, #fff 0 50%, #ccc 0 75%, #fff 0) 0 0 / 32px 32px;
  box-shadow: 0 4px 10px 2px rgba(0, 0, 0, 0.45);
}

.status-bar {
  flex: none;
  display: flex;
  height: 30px;
  background: #d6d6d6;
}

.status-zoom,
.status-icon,
.status-doc {
  border-top: 2px solid #8f8f8f;
  border-right: 2px solid #8f8f8f;
}

.status-zoom {
  width: 116px;
  padding-left: 30px;
  background: #fff;
}

.status-icon {
  width: 42px;
  padding-left: 7px;
}

.status-doc {
  width: 342px;
  font-size: 19px;
  line-height: 28px;
  text-align: center;
}

.status-more {
  width: 28px;
  padding-left: 7px;
  border: 2px solid #aaa;
  border-right-color: #000;
  background: #f2f2f2;
}

.h-scroll {
  flex: 1;
  border: solid #e8e8e8;
  border-width: 2px 0;
  background: #fafafa;
}

.corner {
  width: 24px;
  padding: 4px 0 0 4px;
}

.corner .resize {
  display: block;
}

/* tools */
.toolbox {
  position: absolute;
  top: 0;
  left: 0;
  width: 72px;
  padding-bottom: 10px;
  border: solid #2a2a2a;
  border-width: 0 2px 2px 0;
  background: #d6d6d6;
}

.palette-head {
  display: flex;
  align-items: center;
  height: 24px;
  padding-left: 6px;
  border-bottom: 2px solid #000;
  background: linear-gradient(#5c5c5c, #3c3c3c);
}

.tools {
  display: flex;
  flex-direction: column;
  padding: 12px 10px 0 8px;
}

.tools button {
  position: relative;
  height: 46px;
}

.tools button::after {
  content: "";
  position: absolute;
  right: 2px;
  bottom: 2px;
  border: 3px solid;
  border-color: transparent #000 #000 transparent;
}

.tools .flat::after {
  display: none;
}

.tools svg {
  width: 52px;
  height: 46px;
  filter: drop-shadow(1px 2px 1px rgba(0, 0, 0, 0.25));
}

.tools .on {
  background: linear-gradient(#adadad, #c4c4c4);
  box-shadow: inset 0 0 0 1px #aaa;
}

.tools hr {
  width: 56px;
  height: 4px;
  margin: 2px -2px;
  border: 0;
  border-top: 2px solid #8f8f8f;
  background: #e8e8e8;
}

.tools .type {
  padding-bottom: 4px;
  font: bold 38px/42px "Liberation Serif", serif;
  color: #444;
}

.color-tools {
  display: flex;
  gap: 14px;
  padding: 8px 6px;
}

.color-pair {
  display: grid;
  margin: 0 4px 0 2px;
}

.color-pair button {
  grid-area: 1 / 1;
  width: 44px;
  height: 44px;
  border: 2px solid #bbb;
}

.front-color {
  background: #fff;
}

.color-pair .back-color {
  justify-self: end;
  margin-top: 20px;
  background: #ff0d1b;
  box-shadow: inset 0 0 0 2px #fff;
}

.quick-mask {
  display: grid;
  place-items: center;
  width: 34px;
  height: 26px;
  margin: 12px 16px;
  border: 2px solid #666;
  border-right-color: #000;
  border-bottom-color: #000;
  background: linear-gradient(90deg, #ccc, #fff);
}

/* dock */
.dock {
  position: absolute;
  top: 0;
  right: 0;
  bottom: 56px;
  width: 510px;
  display: flex;
  flex-direction: column;
}

.dock-head {
  height: 26px;
  padding: 0 6px 0 2px;
  border-top: 2px solid #2a2a2a;
  border-left: 2px solid #2a2a2a;
  border-radius: 6px 0 0;
}

.close {
  width: 18px;
  height: 18px;
  margin-right: 32px;
  border: 2px solid #222;
  border-radius: 50%;
  background: #999;
}

.collapse {
  margin-left: auto;
}

.dock-body {
  flex: 1;
  min-height: 0;
  display: flex;
  align-items: flex-start;
}

.icon-dock {
  width: 72px;
  border-left: 2px solid #2a2a2a;
  border-bottom: 2px solid #2a2a2a;
}

.icon-group {
  display: flex;
  flex-direction: column;
  align-items: center;
  gap: 22px;
  padding-bottom: 16px;
  border-bottom: 2px solid #666;
  background: #d6d6d6;
  box-shadow: inset 0 0 0 2px #e0e0e0;
}

.icon-group:last-child {
  border-bottom: 0;
}

.icon-group .grip {
  margin-bottom: -4px;
}

.icon-group button {
  height: 38px;
  display: grid;
  place-items: center;
}

.icon-group svg {
  filter: drop-shadow(1px 2px 1px rgba(0, 0, 0, 0.25));
}

.icon-group .mini-bridge {
  font: bold 18px/24px "Liberation Sans", sans-serif;
  color: #333;
}

.icon-group .char {
  padding-right: 2px;
  border-right: 2px solid #222;
  font-size: 32px;
  color: #333;
}

.icon-group .para {
  font: bold 34px/38px "Liberation Sans", sans-serif;
  color: #555;
}

.panels {
  flex: 1;
  align-self: stretch;
  min-width: 0;
  display: flex;
  flex-direction: column;
  gap: 6px;
  border-left: 2px solid #2a2a2a;
  border-bottom: 2px solid #2a2a2a;
  background: #2a2a2a;
}

.panel {
  background: #d6d6d6;
  box-shadow: inset 0 0 0 2px #e2e2e2;
}

.tabs {
  display: flex;
  align-items: center;
  height: 34px;
  background: linear-gradient(#9c9c9c, #848484);
  font: 600 19px/30px "Open Sans", "Noto Sans", sans-serif;
}

.tabs button {
  height: 34px;
  padding: 0 12px 0 14px;
  border-right: 2px solid #5c5c5c;
  border-bottom: 2px solid #5c5c5c;
  color: #2a2a2a;
}

.tabs .active {
  border-bottom: 0;
  background: linear-gradient(#f2f2f2, #dcdcdc);
}

.menu {
  width: 28px;
  height: 16px;
  margin: 0 8px 0 auto;
}

.swatch-area {
  display: flex;
  margin: 2px 4px 0;
  border-top: 2px solid #8f8f8f;
}

.swatches {
  display: grid;
  grid-template-columns: repeat(16, 22px);
  grid-auto-rows: 22px;
  gap: 2px;
  padding: 0 2px 2px 0;
  background: #000;
}

.scroll {
  flex: none;
  width: 30px;
  margin-left: auto;
  border: solid #e8e8e8;
  border-width: 0 2px;
  background: #fafafa;
}

.thumb {
  display: block;
  width: 16px;
  margin: 6px auto;
  border-radius: 8px;
  background: #c1c1c1;
}

.tall {
  height: 160px;
}

.short {
  height: 36px;
}

.panel-foot {
  display: flex;
  align-items: center;
  justify-content: flex-end;
  height: 34px;
  margin: 0 4px;
  background: linear-gradient(#8f8f8f, #8f8f8f) 0 0 / 398px 2px no-repeat;
}

.page {
  width: 22px;
  height: 22px;
}

.dim {
  opacity: 0.6;
}

.trash {
  width: 22px;
  height: 24px;
  margin: 0 24px 0 34px;
}

.brush-size {
  display: flex;
  height: 70px;
  padding: 2px 18px 0 14px;
}

.size-main {
  width: 348px;
}

.size-row {
  display: flex;
  align-items: center;
}

.size-row label {
  margin-right: auto;
  padding-bottom: 6px;
}

.size-row .field {
  width: 110px;
  height: 34px;
  margin-left: 12px;
}

.track {
  width: 340px;
  height: 6px;
  margin: 20px 0 0 2px;
  border-radius: 3px;
  background: #bdbdbd;
}

.brush-panel {
  margin: 0 0 6px auto;
}

.brush-box {
  display: flex;
  height: 290px;
  margin: 0 4px;
  overflow: hidden;
  border: 2px solid #8f8f8f;
  box-shadow: inset 0 0 0 2px #bbb;
  padding: 2px;
}

.brushes {
  width: 384px;
  margin: 0;
  padding: 0;
  overflow: hidden;
  list-style: none;
  border-right: 2px solid #8f8f8f;
  background: #c6c6c6;
}

.brushes li {
  height: 64px;
  border-bottom: 2px solid #8f8f8f;
}

.brushes svg {
  width: 382px;
  height: 62px;
}

.lined {
  margin-top: 4px;
}

.lined svg:nth-child(2) {
  margin: 0 38px 0 22px;
}

.layers {
  flex: 1;
  min-height: 0;
  display: flex;
  flex-direction: column;
}

.layer-row {
  flex: none;
  display: flex;
  align-items: center;
  margin: 0 4px;
  padding: 0 12px 0 10px;
  border-bottom: 2px solid #8f8f8f;
}

.blend {
  height: 56px;
}

.blend .select {
  width: 232px;
}

.blend label {
  margin-left: auto;
}

.percent {
  display: flex;
  margin-left: 6px;
}

.percent .field {
  width: 66px;
  height: 32px;
  padding: 0 0 0 10px;
}

.percent button {
  width: 20px;
  height: 32px;
  border: 2px solid #aaa;
  border-left: 0;
  border-radius: 0 6px 6px 0;
  background: #fff;
  font-size: 14px;
}

.locks {
  height: 52px;
  gap: 12px;
}

.locks span + svg {
  margin-left: 2px;
}

.locks label {
  margin-left: auto;
}

.locks .percent {
  margin-left: -6px;
}

.layer-list {
  flex: 1;
  min-height: 0;
  display: flex;
  margin: 0 4px;
}

.layer-items {
  flex: 1;
}

.layer {
  display: flex;
  height: 80px;
  border-bottom: 2px solid #8f8f8f;
}

.eye {
  display: grid;
  place-items: center;
  width: 30px;
  height: 30px;
  margin: 22px 8px 0 6px;
  border: 2px solid #8f8f8f;
  border-right-color: #eee;
  border-bottom-color: #eee;
}

.layer-name {
  flex: 1;
  display: flex;
  align-items: center;
  gap: 12px;
  padding-left: 2px;
  border-left: 2px solid #8f8f8f;
  background: #b2d7fd;
  font-weight: 700;
}

.layer-name span {
  padding-top: 6px;
}

.layer-foot {
  flex: none;
  height: 42px;
  padding-bottom: 10px;
  background-size: 100% 2px;
}

.layer-foot > svg:nth-child(3) {
  margin: 0 28px 0 22px;
}

.layer-foot > svg:nth-child(5) {
  margin: 0 34px 0 22px;
}

.layer-foot .trash {
  margin-left: 32px;
}

.fx {
  display: flex;
  align-items: flex-end;
  margin-left: 24px;
  font: italic bold 28px/28px "Liberation Serif", serif;
  color: #333;
}

.fx i {
  border: 3px solid transparent;
  border-top: 4px solid #000;
}
```
